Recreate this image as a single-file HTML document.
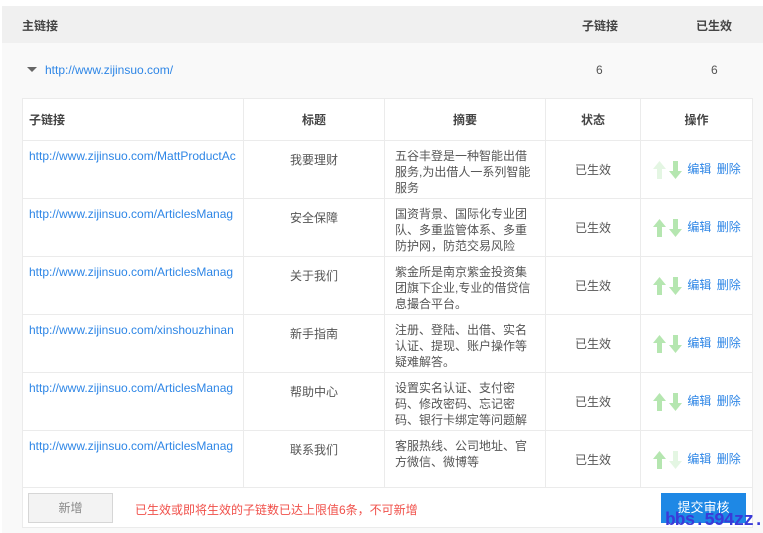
<!DOCTYPE html><html><head><meta charset="utf-8"><style>
*{margin:0;padding:0;box-sizing:border-box}
body{width:763px;height:533px;background:#fff;font-family:"Liberation Sans","Noto Sans CJK SC",sans-serif;font-size:12px;color:#555;position:relative;overflow:hidden}
.a{position:absolute}
.hd{left:2px;top:6px;width:761px;height:37px;background:#f0f0f0}
.bd{left:2px;top:43px;width:761px;height:490px;background:#f9f9f9}
a{color:#2e86e6;text-decoration:none}
table{position:absolute;left:22px;top:98px;border-collapse:collapse;background:#fff}
td,th{border:1px solid #ebebeb;vertical-align:top;font-weight:normal}
th{height:42px;vertical-align:middle;color:#444;font-weight:bold;font-size:12px}
td{height:58px;padding-top:7px;line-height:16px}
.c{text-align:center}
.st{vertical-align:middle;padding-top:0}
.op{vertical-align:middle;padding:0 0 0 12px;white-space:nowrap}
.up,.dn{display:inline-block;vertical-align:middle;width:13px;height:18px}
.up svg,.dn svg{display:block}
.op a{margin-left:2px}
</style></head><body>
<div class="a hd"></div><div class="a bd"></div>
<div class="a" style="left:22px;top:17px;font-weight:bold;color:#444">主链接</div>
<div class="a" style="left:582px;top:17px;font-weight:bold;color:#444">子链接</div>
<div class="a" style="left:696px;top:17px;font-weight:bold;color:#444">已生效</div>
<div class="a" style="left:27px;top:67px;width:0;height:0;border-left:5px solid transparent;border-right:5px solid transparent;border-top:5px solid #666"></div>
<div class="a" style="left:45px;top:63px"><a>http://www.zijinsuo.com/</a></div>
<div class="a" style="left:596px;top:63px">6</div>
<div class="a" style="left:711px;top:63px">6</div>
<table>
<tr><th style="width:221px;text-align:left;padding-left:6px">子链接</th><th style="width:141px">标题</th><th style="width:161px">摘要</th><th style="width:95px">状态</th><th style="width:112px">操作</th></tr>
<tr><td style="padding-left:6px"><a>http://www.zijinsuo.com/MattProductAc</a></td><td class="c" style="padding-top:11px">我要理财</td><td style="padding-left:10px;padding-right:8px">五谷丰登是一种智能出借服务,为出借人一系列智能服务</td><td class="c st">已生效</td><td class="op"><span class="up" style="opacity:.35"><svg width="13" height="18"><path d="M6.5 0L13 8H9V18H4V8H0Z" fill="#b5e6b0"/></svg></span><span class="dn" style="margin-left:3px"><svg width="13" height="18"><path d="M4 0H9V10H13L6.5 18L0 10H4Z" fill="#b5e6b0"/></svg></span> <a>编辑</a> <a>删除</a></td></tr>
<tr><td style="padding-left:6px"><a>http://www.zijinsuo.com/ArticlesManag</a></td><td class="c" style="padding-top:11px">安全保障</td><td style="padding-left:10px;padding-right:8px">国资背景、国际化专业团队、多重监管体系、多重防护网，防范交易风险</td><td class="c st">已生效</td><td class="op"><span class="up"><svg width="13" height="18"><path d="M6.5 0L13 8H9V18H4V8H0Z" fill="#b5e6b0"/></svg></span><span class="dn" style="margin-left:3px"><svg width="13" height="18"><path d="M4 0H9V10H13L6.5 18L0 10H4Z" fill="#b5e6b0"/></svg></span> <a>编辑</a> <a>删除</a></td></tr>
<tr><td style="padding-left:6px"><a>http://www.zijinsuo.com/ArticlesManag</a></td><td class="c" style="padding-top:11px">关于我们</td><td style="padding-left:10px;padding-right:8px">紫金所是南京紫金投资集团旗下企业,专业的借贷信息撮合平台。</td><td class="c st">已生效</td><td class="op"><span class="up"><svg width="13" height="18"><path d="M6.5 0L13 8H9V18H4V8H0Z" fill="#b5e6b0"/></svg></span><span class="dn" style="margin-left:3px"><svg width="13" height="18"><path d="M4 0H9V10H13L6.5 18L0 10H4Z" fill="#b5e6b0"/></svg></span> <a>编辑</a> <a>删除</a></td></tr>
<tr><td style="padding-left:6px"><a>http://www.zijinsuo.com/xinshouzhinan</a></td><td class="c" style="padding-top:11px">新手指南</td><td style="padding-left:10px;padding-right:8px">注册、登陆、出借、实名认证、提现、账户操作等疑难解答。</td><td class="c st">已生效</td><td class="op"><span class="up"><svg width="13" height="18"><path d="M6.5 0L13 8H9V18H4V8H0Z" fill="#b5e6b0"/></svg></span><span class="dn" style="margin-left:3px"><svg width="13" height="18"><path d="M4 0H9V10H13L6.5 18L0 10H4Z" fill="#b5e6b0"/></svg></span> <a>编辑</a> <a>删除</a></td></tr>
<tr><td style="padding-left:6px"><a>http://www.zijinsuo.com/ArticlesManag</a></td><td class="c" style="padding-top:11px">帮助中心</td><td style="padding-left:10px;padding-right:8px">设置实名认证、支付密码、修改密码、忘记密码、银行卡绑定等问题解</td><td class="c st">已生效</td><td class="op"><span class="up"><svg width="13" height="18"><path d="M6.5 0L13 8H9V18H4V8H0Z" fill="#b5e6b0"/></svg></span><span class="dn" style="margin-left:3px"><svg width="13" height="18"><path d="M4 0H9V10H13L6.5 18L0 10H4Z" fill="#b5e6b0"/></svg></span> <a>编辑</a> <a>删除</a></td></tr>
<tr><td style="padding-left:6px"><a>http://www.zijinsuo.com/ArticlesManag</a></td><td class="c" style="padding-top:11px">联系我们</td><td style="padding-left:10px;padding-right:8px">客服热线、公司地址、官方微信、微博等</td><td class="c st">已生效</td><td class="op"><span class="up"><svg width="13" height="18"><path d="M6.5 0L13 8H9V18H4V8H0Z" fill="#b5e6b0"/></svg></span><span class="dn" style="margin-left:3px;opacity:.35"><svg width="13" height="18"><path d="M4 0H9V10H13L6.5 18L0 10H4Z" fill="#b5e6b0"/></svg></span> <a>编辑</a> <a>删除</a></td></tr>
</table>
<div class="a" style="left:22px;top:487px;width:731px;height:41px;background:#fff;border:1px solid #ebebeb"></div>
<div class="a" style="left:28px;top:493px;width:85px;height:30px;background:#f3f3f3;border:1px solid #d6d6d6;color:#888;text-align:center;line-height:28px">新增</div>
<div class="a" style="left:135px;top:501px;color:#f0504a">已生效或即将生效的子链数已达上限值6条，不可新增</div>
<div class="a" style="left:661px;top:493px;width:85px;height:30px;background:#1e88e5;color:#fff;text-align:center;line-height:30px;font-size:13px">提交审核</div>
<div class="a" style="left:665px;top:511px;color:#3a3ad8;font-weight:bold;font-size:18px;letter-spacing:-1px;font-family:'Liberation Mono',monospace">bbs.594zz.com</div>
</body></html>
